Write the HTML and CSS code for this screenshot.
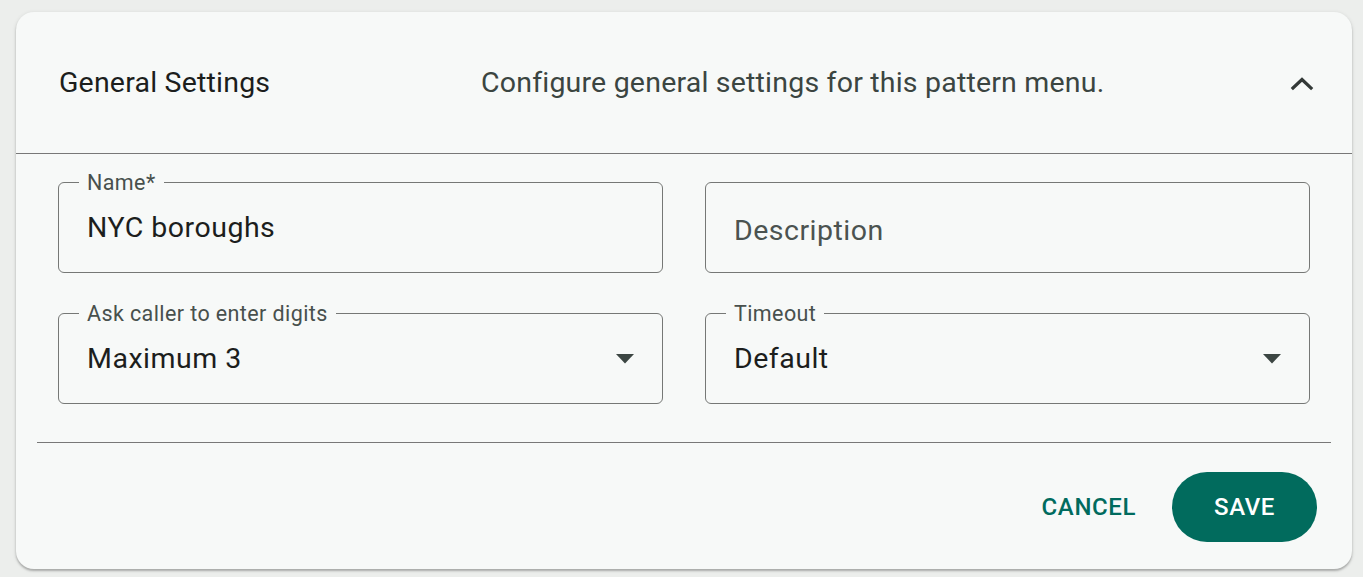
FILE: index.html
```html
<!DOCTYPE html>
<html>
<head>
<meta charset="utf-8">
<link rel="stylesheet" href="styles.css">
</head>
<body>
<div class="card">
  <div class="summary">
    <div class="title">General Settings</div>
    <div class="subtitle">Configure general settings for this pattern menu.</div>
    <svg class="chevron" width="24" height="24" viewBox="0 0 24 24"><path d="M3 17 L12 8.5 L21 17" fill="none" stroke="#333937" stroke-width="3.2" stroke-linecap="square"/></svg>
  </div>
  <div class="details">
    <div class="grid">
      <div class="field">
        <span class="label">Name*</span>
        <span class="value">NYC boroughs</span>
      </div>
      <div class="field">
        <span class="value placeholder">Description</span>
      </div>
      <div class="field select">
        <span class="label">Ask caller to enter digits</span>
        <span class="value">Maximum 3</span>
        <svg class="caret" width="18" height="10" viewBox="0 0 18 10"><path d="M0 0 H18 L9 9.5 Z" fill="#3c4643"/></svg>
      </div>
      <div class="field select">
        <span class="label">Timeout</span>
        <span class="value">Default</span>
        <svg class="caret" width="18" height="10" viewBox="0 0 18 10"><path d="M0 0 H18 L9 9.5 Z" fill="#3c4643"/></svg>
      </div>
    </div>
    <div class="divider"></div>
    <div class="actions">
      <button class="btn cancel">CANCEL</button>
      <button class="btn save">SAVE</button>
    </div>
  </div>
</div>
</body>
</html>
```

FILE: styles.css
```css
* { box-sizing: border-box; }
html, body { margin: 0; padding: 0; }
body {
  background: #eceeec;
  font-family: Roboto, "Liberation Sans", Arial, sans-serif;
  padding: 12px 11px 8px 16px;
  height: 577px;
}
.card {
  width: 1336px;
  height: 557px;
  background: #f7f9f8;
  border-radius: 18px;
  box-shadow: 0 2px 2px rgba(0,0,0,0.22), 0 1px 4px rgba(0,0,0,0.12);
  display: flex;
  flex-direction: column;
}
.summary {
  height: 142px;
  border-bottom: 1px solid #787878;
  display: flex;
  align-items: center;
  padding: 0 38px 0 43px;
}
.title {
  font-size: 28.5px;
  color: #1c1e1d;
  width: 422px;
  letter-spacing: 0.2px;
}
.subtitle {
  flex: 1;
  font-size: 28.5px;
  color: #3b4541;
  letter-spacing: 0.2px;
}
.chevron { display: block; }
.details {
  padding: 28px 21px 0 21px;
}
.grid {
  display: grid;
  grid-template-columns: 1fr 1fr;
  column-gap: 42px;
  row-gap: 40px;
  padding: 0 21px;
}
.field {
  position: relative;
  height: 91px;
  border: 1px solid #767876;
  border-radius: 6px;
  display: flex;
  align-items: center;
  padding: 0 28px;
}
.field .label {
  position: absolute;
  left: 20px;
  top: -12px;
  padding: 0 8px;
  background: #f7f9f8;
  font-size: 21.5px;
  line-height: 24px;
  color: #48504d;
  letter-spacing: 0.4px;
}
.value {
  font-size: 28.5px;
  color: #1c1e1d;
  letter-spacing: 0.5px;
}
.placeholder { color: #4b5350; margin-top: 5px; }
.select { justify-content: space-between; padding-right: 28px; }
.caret { display: block; }
.divider {
  height: 1px;
  background: #787878;
  margin-top: 38px;
}
.actions {
  display: flex;
  justify-content: flex-end;
  align-items: center;
  gap: 36px;
  padding: 29px 14px 0 0;
}
.btn {
  font-family: Roboto, "Liberation Sans", Arial, sans-serif;
  font-size: 24px;
  font-weight: 500;
  letter-spacing: 0.6px;
  border: none;
  background: none;
  cursor: pointer;
}
.cancel {
  color: #006b5e;
  padding: 0;
}
.save {
  background: #016b5d;
  color: #ffffff;
  width: 145px;
  height: 70px;
  border-radius: 35px;
}
```
